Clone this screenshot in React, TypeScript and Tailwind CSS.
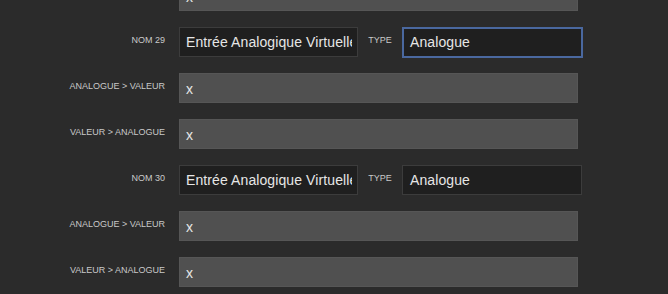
import React from "react";

const font = { fontFamily: '"Liberation Sans", Arial, sans-serif' };

function Label({ text }: { text: string }) {
  return (
    <div className="w-[165px] shrink-0 text-right text-[9px] leading-none text-[#c9c9c9] uppercase pb-[3px]">
      {text}
    </div>
  );
}

function GrayRow({ label }: { label: string }) {
  return (
    <div className="flex items-center h-[30px]">
      <Label text={label} />
      <div className="ml-[14px] w-[399px] h-[30px] bg-[#505050] border border-[#565656] flex items-center px-[6px] text-[14px] text-[#e6e6e6] pt-[2px]">
        x
      </div>
    </div>
  );
}

function NameRow({ num, focused }: { num: number; focused?: boolean }) {
  return (
    <div className="flex items-center h-[30px]">
      <Label text={`Nom ${num}`} />
      <div className="ml-[14px] w-[179px] h-[30px] bg-[#1f1f1f] border border-[#3c3c3c] flex items-center pl-[6px] pr-[5px] text-[14px] tracking-[0.1px] text-[#e6e6e6]">
        <div className="overflow-hidden whitespace-nowrap w-full">Entrée Analogique Virtuelle</div>
      </div>
      <div className="w-[44px] shrink-0 text-center text-[9px] leading-none text-[#c9c9c9] pb-[4px]">
        TYPE
      </div>
      <div
        className={
          focused
            ? "w-[181px] h-[31px] bg-[#1f1f1f] border-2 border-[#4a689f] flex items-center px-[6px] text-[14px] tracking-[0.1px] text-[#e6e6e6]"
            : "w-[180px] h-[30px] bg-[#1f1f1f] border border-[#3c3c3c] flex items-center px-[7px] text-[14px] tracking-[0.1px] text-[#e6e6e6]"
        }
      >
        Analogue
      </div>
    </div>
  );
}

export default function App() {
  return (
    <div
      className="w-[668px] h-[294px] bg-[#2b2b2b] overflow-hidden"
      style={font}
    >
      <div className="flex flex-col gap-[16px] mt-[-19px]">
        <GrayRow label="" />
        <NameRow num={29} focused />
        <GrayRow label="Analogue > Valeur" />
        <GrayRow label="Valeur > Analogue" />
        <NameRow num={30} />
        <GrayRow label="Analogue > Valeur" />
        <GrayRow label="Valeur > Analogue" />
      </div>
    </div>
  );
}
